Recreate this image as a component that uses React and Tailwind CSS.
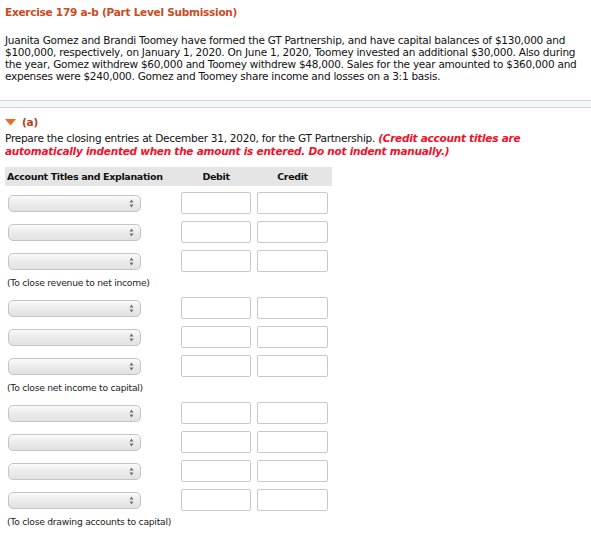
import React from "react";

const font = { fontFamily: '"DejaVu Sans", Verdana, sans-serif' };

const SelectBox = () => (
  <div className="relative ml-[3px] h-[17px] w-[133px] rounded-[5px] border border-[#c4c4c4] bg-[linear-gradient(180deg,#fbfbfb_0%,#ececec_45%,#e2e2e2_100%)]">
    <svg className="absolute right-[6px] top-[3px]" width="5" height="9" viewBox="0 0 5 9">
      <path d="M2.5 0.5 L4.5 3.5 L0.5 3.5 Z" fill="#6f6f6f" />
      <path d="M2.5 8.5 L4.5 5.5 L0.5 5.5 Z" fill="#6f6f6f" />
    </svg>
  </div>
);

const EntryRow = () => (
  <div className="flex h-[22px] items-center">
    <SelectBox />
    <div className="ml-[40px] h-[22px] w-[70px] rounded-[2px] border border-[#c9c9c9] bg-white" />
    <div className="ml-[6px] h-[22px] w-[71px] rounded-[2px] border border-[#c9c9c9] bg-white" />
  </div>
);

const Block = ({ rows, note, className = "" }) => (
  <div className={className}>
    <div className="flex flex-col gap-[7px]">
      {Array.from({ length: rows }).map((_, i) => (
        <EntryRow key={i} />
      ))}
    </div>
    <p className="ml-[2px] mt-[4px] whitespace-nowrap text-[9.2px] leading-[14px] text-[#222]">{note}</p>
  </div>
);

export default function App() {
  return (
    <div className="min-h-[550px] w-[591px] overflow-hidden bg-white text-[10.5px] tracking-[-0.25px] text-[#111]" style={font}>
      <div className="px-[5px] pt-[6px]">
        <h1 className="whitespace-nowrap text-[10.5px] font-bold leading-[13px] text-[#cc4a1e]">
          Exercise 179 a-b (Part Level Submission)
        </h1>
        <div className="mt-[15px] whitespace-nowrap leading-[12.1px]">
          <div>Juanita Gomez and Brandi Toomey have formed the GT Partnership, and have capital balances of $130,000 and</div>
          <div>$100,000, respectively, on January 1, 2020. On June 1, 2020, Toomey invested an additional $30,000. Also during</div>
          <div>the year, Gomez withdrew $60,000 and Toomey withdrew $48,000. Sales for the year amounted to $360,000 and</div>
          <div>expenses were $240,000. Gomez and Toomey share income and losses on a 3:1 basis.</div>
        </div>
      </div>

      <div className="mt-[18px] h-[8px] border-y border-[#cfd5de] bg-[#f4f6fa]" />

      <div className="px-[5px]">
        <div className="mt-[8px] flex items-center gap-[6px] leading-[13px]">
          <svg width="11" height="7" viewBox="0 0 11 7">
            <path d="M0 0 L11 0 L5.5 6.5 Z" fill="#f26a21" />
          </svg>
          <span className="font-bold text-[#b5401c]">(a)</span>
        </div>
        <div className="mt-[3px] whitespace-nowrap leading-[12.5px]">
          <div>
            Prepare the closing entries at December 31, 2020, for the GT Partnership.{" "}
            <span className="font-bold italic text-[#f2102a]">(Credit account titles are</span>
          </div>
          <div className="font-bold italic text-[#f2102a]">
            automatically indented when the amount is entered. Do not indent manually.)
          </div>
        </div>

        <div className="mt-[10px] flex h-[19px] w-[327px] items-center whitespace-nowrap bg-[#e5e5e5] text-[9.5px] font-bold tracking-[-0.35px]">
          <div className="w-[176px] pl-[2px]">Account Titles and Explanation</div>
          <div className="w-[70px] text-center">Debit</div>
          <div className="ml-[6px] w-[71px] text-center">Credit</div>
        </div>

        <Block className="mt-[6px]" rows={3} note="(To close revenue to net income)" />
        <Block className="mt-[7px]" rows={3} note="(To close net income to capital)" />
        <Block className="mt-[7px]" rows={4} note="(To close drawing accounts to capital)" />
      </div>
    </div>
  );
}
